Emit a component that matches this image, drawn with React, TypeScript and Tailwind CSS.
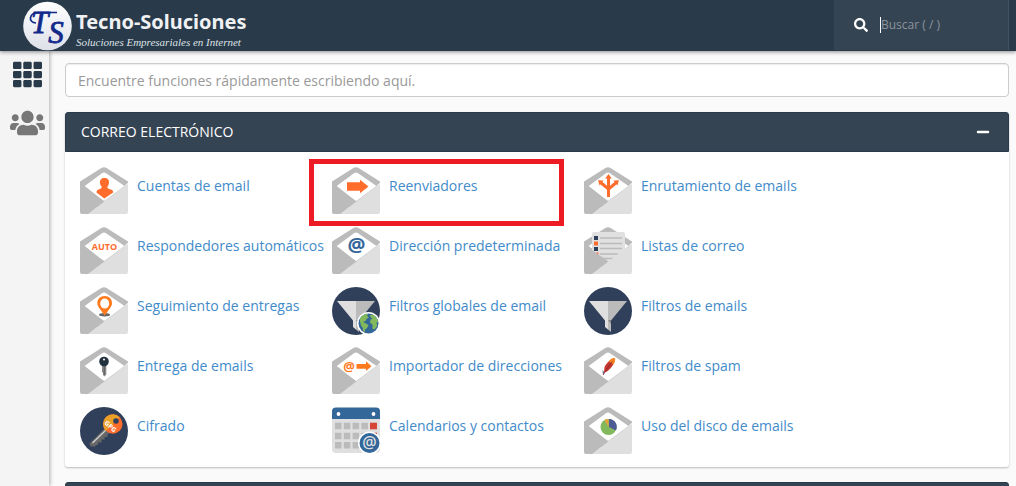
"use client";

import React from 'react';
import { FaMinus, FaSearch, FaTh, FaUsers } from 'react-icons/fa';

interface Feature {
    label: string;
    icon: React.ReactNode;
    highlighted?: boolean;
}

const Envelope: React.FC<{ children?: React.ReactNode }> = ({ children }) => (
    <svg viewBox="0 0 48 48" className="w-12 h-12 shrink-0" aria-hidden="true">
        <path d="M21 1.2Q24-.9 27 1.2L48 14.5V40H0V14.5Z" fill="#bbb" />
        <path d="M22.3 6Q24 4.8 25.7 6L44.5 19 24 34.3 4.7 19Z" fill="#fff" />
        {children}
        <path d="M0 17.5V45Q0 47 2 47H9L24.3 34.3Z" fill="#bbb" />
        <path d="M44 19.6 48 17.3V45Q48 47 46 47H8Z" fill="#dfdfdf" />
        <path d="M43.6 19.8 48 17.2V15.8Z" fill="#fff" />
    </svg>
);

const Funnel: React.FC<{ children?: React.ReactNode }> = ({ children }) => (
    <svg viewBox="0 0 48 48" className="w-12 h-12 shrink-0" aria-hidden="true">
        <circle cx="24" cy="24" r="24" fill="#30405b" />
        <path d="M5 14H24V33.500H21Z" fill="#dfdfdf" />
        <path d="M24 14H43L27 33.500H24Z" fill="#bbb" />
        <path d="M21 33H24V42.500L21 40Z" fill="#dfdfdf" />
        <path d="M24 33H27V45L24 42.500Z" fill="#bbb" />
        <path d="M24 33H27V37Z" fill="#888" />
        {children}
    </svg>
);

const features: Feature[] = [
    {
        label: 'Cuentas de email',
        icon: (
            <Envelope>
                <path d="M24.500 11c3.200 0 4.800 2 4.500 5-.2 2-1 3-1.600 3.800 0 1.500.6 2 2.600 2.500 2.200.6 3.200 1.200 3.200 3.200L24.300 31.500 16.500 25.500c0-2 .8-2.600 2.800-3.200 1.800-.5 2.400-1 2.400-2.500-.8-.8-1.500-2-1.700-3.800-.3-3 1.300-5 4.500-5Z" fill="#ff6c2c" />
            </Envelope>
        ),
    },
    {
        label: 'Reenviadores',
        highlighted: true,
        icon: (
            <Envelope>
                <path d="M15 15.300H28V12.700L36.500 19.500 28 26.300V23.700H15Z" fill="#ff6c2c" />
            </Envelope>
        ),
    },
    {
        label: 'Enrutamiento de emails',
        icon: (
            <Envelope>
                <path d="M24.500 30V10M24.500 23.500V22L16 15M24.500 23.500V22L33 15" fill="none" stroke="#ff6c2c" strokeWidth="3" />
                <path d="M24.500 7 27.800 11.500H21.200ZM14 13.200 19.500 13.600 15.600 18.500ZM35 13.200 29.500 13.600 33.400 18.500Z" fill="#ff6c2c" />
            </Envelope>
        ),
    },
    {
        label: 'Respondedores automáticos',
        icon: (
            <Envelope>
                <text x="24.500" y="22.500" textAnchor="middle" fontFamily="Open Sans, sans-serif" fontWeight="700" fontSize="9" fill="#ff6c2c">AUTO</text>
            </Envelope>
        ),
    },
    {
        label: 'Dirección predeterminada',
        icon: (
            <Envelope>
                <text x="24.500" y="25" textAnchor="middle" fontFamily="Open Sans, sans-serif" fontWeight="700" fontSize="20" fill="#336699">@</text>
            </Envelope>
        ),
    },
    {
        label: 'Listas de correo',
        icon: (
            <Envelope>
                <path d="M8 7Q8 5 10 5H39Q41 5 41 7V25L24 36 8 25Z" fill="#e0e0e0" />
                <path d="M16 11H38M16 16.500H38M16 21.500H38M16 27H34M19 31.500H30" stroke="#bbb" strokeWidth="1.500" />
                <path d="M10 9H14V13H10ZM10 20H14V24H10Z" fill="#30405b" />
                <path d="M10 14.500H14V18.500H10ZM12 25.500H14.500V28Z" fill="#ff6c2c" />
            </Envelope>
        ),
    },
    {
        label: 'Seguimiento de entregas',
        icon: (
            <Envelope>
                <ellipse cx="24.500" cy="27.800" rx="5.500" ry="1.700" fill="#666" />
                <path fillRule="evenodd" d="M24.700 9c4.300 0 7.300 3 7.300 7 0 4-3.200 6-4.600 9L24.700 28.500 22 25c-1.400-3-4.600-5-4.600-9 0-4 3-7 7.300-7Zm0 2.600a4.500 5 0 1 0 0 10 4.500 5 0 1 0 0-10Z" fill="#ff7a1c" />
            </Envelope>
        ),
    },
    {
        label: 'Filtros globales de email',
        icon: (
            <Funnel>
                <circle cx="36.500" cy="36.500" r="11.500" fill="#fff" />
                <circle cx="36.500" cy="36.500" r="10" fill="#336699" />
                <path d="M28 31.500C30 28 33 26.800 36 27l-1 2 2 1-2.500 2-1 2-2.500 1 3 1.500 2.500 1.500-1.500 3-2 1.500-.5 3.500c-1-1-1.500-4-2-5.500l-1.500-2-1-4ZM38 28l3-.2c2.500 1.200 4.500 4 5.200 7l-1.700 1 .8 3-3 4-2-1.500.4-3.500-2.700-2 .5-3 2-1.500-2-1Z" fill="#84b85c" />
            </Funnel>
        ),
    },
    { label: 'Filtros de emails', icon: <Funnel /> },
    {
        label: 'Entrega de emails',
        icon: (
            <Envelope>
                <path d="M22 18H26.300V27.500L24.500 29.500 23 28V25.500H22Z" fill="#888" />
                <path d="M24.300 19V28" stroke="#555" strokeWidth=".8" />
                <circle cx="24" cy="14.500" r="4.800" fill="#23303e" />
                <circle cx="24" cy="12.500" r="1" fill="#fff" />
            </Envelope>
        ),
    },
    {
        label: 'Importador de direcciones',
        icon: (
            <Envelope>
                <text x="17" y="23.500" textAnchor="middle" fontFamily="Open Sans, sans-serif" fontWeight="700" fontSize="13" fill="#ff7a1c">@</text>
                <path d="M24.500 17H34V14.300L39.500 19.300 34 24V21.700H24.500Z" fill="#ff7a1c" />
            </Envelope>
        ),
    },
    {
        label: 'Filtros de spam',
        icon: (
            <Envelope>
                <path d="M18.500 23 20.500 25.500 19.500 28 18.700 26Z" fill="#666e99" />
                <path d="M31 11.500C28 11 23 15 20.500 20L20 25.500 23 24.500C27 21.500 30.500 17 31 11.500Z" fill="#c5352b" />
                <path d="M31 11C28.500 10.500 26 12.500 24.500 14.500L29.500 17.500C31 15 31.500 13 31 11Z" fill="#f58220" />
                <path d="M19 28 28 14.500" stroke="#8b1f2f" strokeWidth=".8" />
            </Envelope>
        ),
    },
    {
        label: 'Cifrado',
        icon: (
            <svg viewBox="0 0 48 48" className="w-12 h-12 shrink-0" aria-hidden="true">
                <circle cx="24" cy="24" r="24" fill="#30405b" />
                <path d="M25 21 30 26 27.500 27.500V30H24.500V32.500H21.500V35.500H18V38H15.500V39.500H10.500L9.500 36.500Z" fill="#666" />
                <path d="M12.500 36 27 22" stroke="#ccc" strokeWidth="1.500" />
                <circle cx="32.800" cy="17" r="9.700" fill="#ff6c2c" />
                <path d="M25.900 23.900A9.700 9.700 0 0 1 39.700 10.100Z" fill="#eba129" />
                <circle cx="36" cy="14" r="2.800" fill="#30405b" />
                <text x="31" y="22" textAnchor="middle" transform="rotate(43 31 19)" fontFamily="Open Sans, sans-serif" fontWeight="700" fontSize="6.500" fill="#fff">GPG</text>
            </svg>
        ),
    },
    {
        label: 'Calendarios y contactos',
        icon: (
            <svg viewBox="0 0 48 48" className="w-12 h-12 shrink-0" aria-hidden="true">
                <rect y="1" width="48" height="45" rx="4" fill="#dfdfdf" />
                <path d="M0 12V4.500Q0 .5 4 .5H44Q48 .5 48 4.500V12Z" fill="#336699" />
                <circle cx="6.500" cy="7" r="1.900" fill="#fff" />
                <circle cx="41.500" cy="7" r="1.900" fill="#fff" />
                <path d="M3 19H45M3 29H45M3 38.300H45" stroke="#bbb" strokeWidth="6.500" strokeDasharray="6.500 2.300" />
                <path d="M38 15.800H45V22.200H38ZM38 25.800H45V32H38Z" fill="#d64535" />
                <circle cx="37.500" cy="36" r="11.500" fill="#fff" />
                <circle cx="37.500" cy="36" r="10" fill="#336699" />
                <text x="37.500" y="41" textAnchor="middle" fontFamily="Open Sans, sans-serif" fontWeight="600" fontSize="16" fill="#dfdfdf">@</text>
            </svg>
        ),
    },
    {
        label: 'Uso del disco de emails',
        icon: (
            <Envelope>
                <circle cx="24.500" cy="20" r="8" fill="#84b85c" />
                <path d="M25 20V12A8 8 0 0 1 32 23.500Z" fill="#4f5b93" />
                <path d="M24.500 20 20.500 13Q22 12 24.500 12Z" fill="#eba13a" />
            </Envelope>
        ),
    },
];

const Logo: React.FC = () => (
    <a href="#" className="flex items-center gap-[3px] ml-[23px] text-white">
        <svg viewBox="0 0 50 50" className="w-[50px] h-[50px]" aria-hidden="true">
            <defs>
                <linearGradient id="disc" x1="0" y1="0" x2="0" y2="1">
                    <stop offset="0" stopColor="#fff" />
                    <stop offset="1" stopColor="#dde0e8" />
                </linearGradient>
            </defs>
            <circle cx="24.500" cy="25" r="24.300" fill="url(#disc)" />
            <text x="8" y="32" fontSize="31" fontFamily="Liberation Serif, serif" fontStyle="italic" fill="#12298a" stroke="#12298a" strokeWidth=".8">T<tspan dy="10">S</tspan></text>
            <path d="M13 22C5 22 5 11 17 11.500H34" fill="none" stroke="#12298a" strokeWidth="1.700" />
        </svg>
        <span className="flex flex-col pt-2">
            <span className="font-['Noto_Sans'] text-[20px] leading-6 font-bold text-[#f0f1f3]">Tecno-Soluciones</span>
            <span className="font-['Liberation_Serif'] italic text-[11px] leading-4 text-[#dfe2e6]">Soluciones Empresariales en Internet</span>
        </span>
    </a>
);

const App: React.FC = () => {
    return (
        <div className="flex flex-col h-screen overflow-hidden bg-[#fafafa] font-['Open_Sans',sans-serif] text-sm">
            <header className="relative z-20 flex justify-between h-[51px] shrink-0 bg-[#293a4a] pr-[7px] shadow-[0_1px_4px_rgba(0,0,0,0.45)]">
                <Logo />
                <label className="flex items-center w-[175px] h-[50px] pl-5 bg-[#354453] border-r border-[#435160]">
                    <FaSearch className="w-[14px] h-[14px] mr-3 text-white" />
                    <input type="text" aria-label="Buscar" placeholder="Buscar ( / )" className="w-24 h-4 text-xs border-l border-white bg-transparent outline-none text-white placeholder:text-[#8b939b]" />
                </label>
            </header>

            <div className="flex flex-1 min-h-0">
                <nav className="z-10 flex flex-col items-center gap-5 w-[49px] shrink-0 pt-[9px] pl-[6px] bg-[#f4f4f4] shadow-[1px_0_4px_rgba(0,0,0,0.3)]">
                    <button type="button" aria-label="Herramientas" className="text-[#293a4a]">
                        <FaTh className="w-[29px] h-[29px]" />
                    </button>
                    <button type="button" aria-label="Usuarios" className="text-[#777]">
                        <FaUsers className="w-[35px] h-7" />
                    </button>
                </nav>

                <main className="flex flex-col flex-1 gap-[15px] min-w-0 pt-3 pl-4 pr-[7px]">
                    <input
                        type="text"
                        aria-label="Encuentre funciones"
                        placeholder="Encuentre funciones rápidamente escribiendo aquí."
                        className="w-full h-[34px] shrink-0 px-3 bg-white border border-[#ccc] rounded shadow-[inset_0_1px_1px_rgba(0,0,0,0.075)] outline-none placeholder:text-[#999]"
                    />

                    <section className="shrink-0 bg-white rounded-[3px] shadow-[0_1px_2px_rgba(0,0,0,0.25)]">
                        <div className="flex items-center justify-between h-10 px-[15px] rounded-t-[3px] bg-[#354453] border border-[#293a4a] text-white">
                            <h2>CORREO ELECTRÓNICO</h2>
                            <button type="button" aria-label="Contraer">
                                <FaMinus className="w-[14px] h-[14px] mr-[3px]" />
                            </button>
                        </div>
                        <ul className="grid grid-cols-[repeat(auto-fill,252px)] gap-y-3 px-[15px] pt-[15px] pb-3">
                            {features.map((feature) => (
                                <li key={feature.label} className="relative">
                                    <a href="#" className="flex gap-[9px] text-[#428bca]">
                                        {feature.icon}
                                        <span className="pt-[9px] leading-5 whitespace-nowrap">{feature.label}</span>
                                    </a>
                                    {feature.highlighted && (
                                        <span className="absolute -top-2 -left-[23px] w-[255px] h-[67px] border-5 border-[#ed1c24] pointer-events-none" />
                                    )}
                                </li>
                            ))}
                        </ul>
                    </section>

                    {/* next group, only its top edge fits in the window */}
                    <section className="h-10 shrink-0 rounded-t-[3px] bg-[#354453] border border-[#293a4a]" />
                </main>
            </div>
        </div>
    );
};

export default App;
